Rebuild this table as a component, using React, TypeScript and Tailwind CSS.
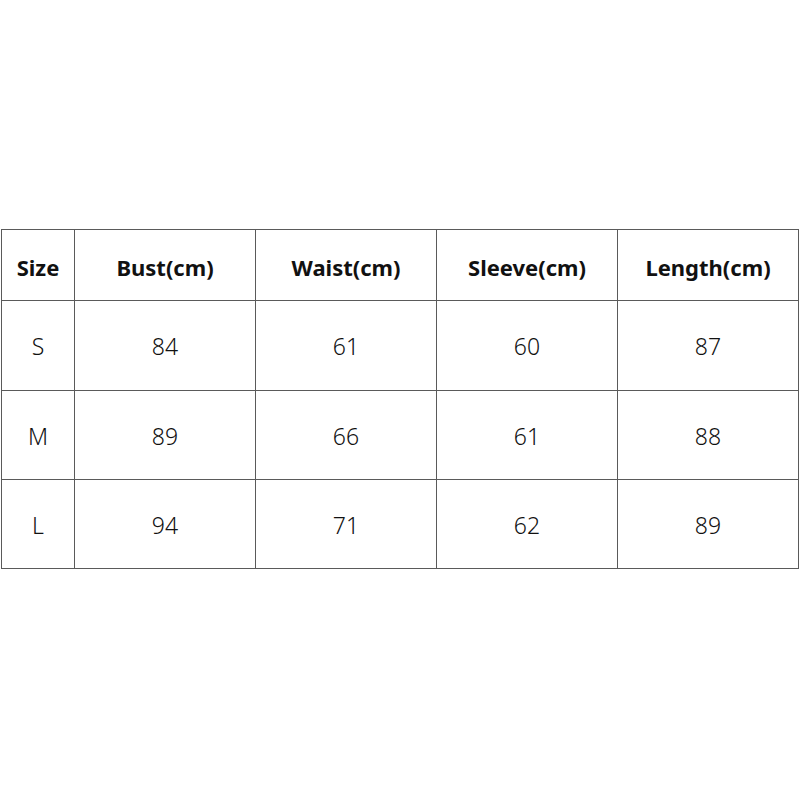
const headers = ["Size", "Bust(cm)", "Waist(cm)", "Sleeve(cm)", "Length(cm)"];

const rows = [
  ["S", "84", "61", "60", "87"],
  ["M", "89", "66", "61", "88"],
  ["L", "94", "71", "62", "89"],
];

const widths = ["w-[73px]", "w-[181px]", "w-[181px]", "w-[181px]", "w-[181px]"];

export default function App() {
  return (
    <div className="w-[800px] h-[800px] bg-white pt-[229px] pl-px font-['Noto_Sans','Liberation_Sans',sans-serif] text-[#111]">
      <table className="border-collapse table-fixed w-[798px]">
        <thead>
          <tr className="h-[71px]">
            {headers.map((h, i) => (
              <th
                key={h}
                className={`${widths[i]} border border-[#5a5a5a] text-center align-middle text-[22px] font-bold pt-[5px]`}
              >
                {h}
              </th>
            ))}
          </tr>
        </thead>
        <tbody>
          {rows.map((row, r) => (
            <tr key={r} className={r === 0 ? "h-[90px]" : "h-[89px]"}>
              {row.map((cell, i) => (
                <td
                  key={i}
                  className="border border-[#5a5a5a] text-center align-middle text-[23px] font-light pt-[2px]"
                >
                  {cell}
                </td>
              ))}
            </tr>
          ))}
        </tbody>
      </table>
    </div>
  );
}
